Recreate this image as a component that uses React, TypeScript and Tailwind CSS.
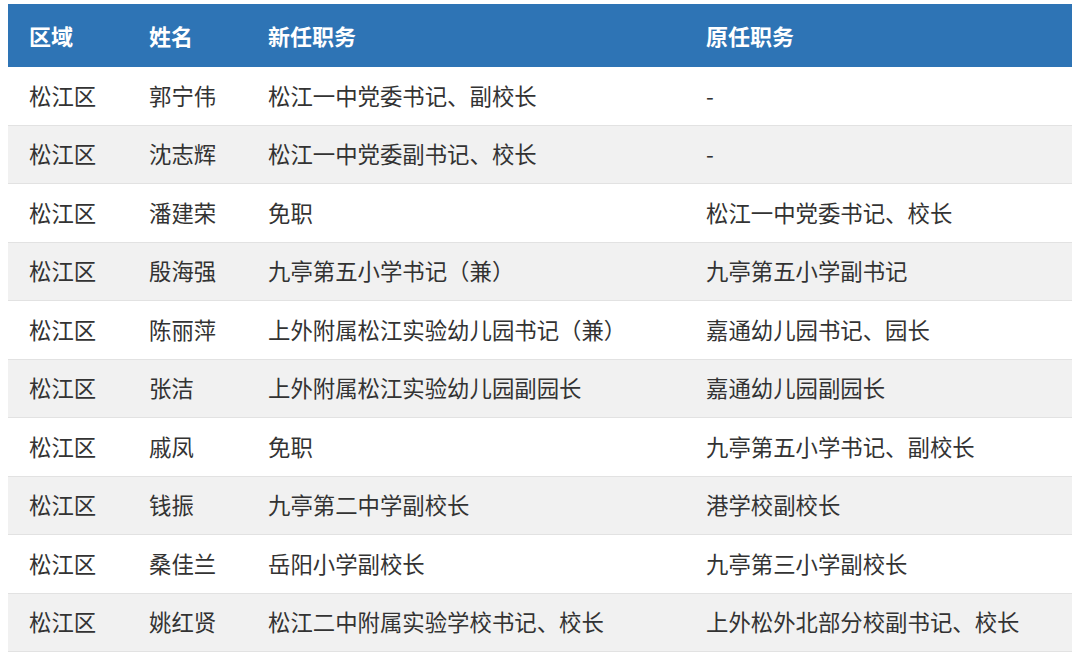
const rows = [
  ["松江区", "郭宁伟", "松江一中党委书记、副校长", "-"],
  ["松江区", "沈志辉", "松江一中党委副书记、校长", "-"],
  ["松江区", "潘建荣", "免职", "松江一中党委书记、校长"],
  ["松江区", "殷海强", "九亭第五小学书记（兼）", "九亭第五小学副书记"],
  ["松江区", "陈丽萍", "上外附属松江实验幼儿园书记（兼）", "嘉通幼儿园书记、园长"],
  ["松江区", "张洁", "上外附属松江实验幼儿园副园长", "嘉通幼儿园副园长"],
  ["松江区", "戚凤", "免职", "九亭第五小学书记、副校长"],
  ["松江区", "钱振", "九亭第二中学副校长", "港学校副校长"],
  ["松江区", "桑佳兰", "岳阳小学副校长", "九亭第三小学副校长"],
  ["松江区", "姚红贤", "松江二中附属实验学校书记、校长", "上外松外北部分校副书记、校长"],
]

const cols = ["w-[120px]", "w-[119px]", "w-[438px]", "flex-1"]

export default function App() {
  return (
    <div className="w-[1080px] h-[658px] bg-white pt-[4px] pl-[8px] font-['Noto_Sans_CJK_SC',sans-serif]">
      <div className="w-[1064px]">
        {/* Header */}
        <div className="flex h-[63px] items-center bg-[#2e74b5] text-[22px] font-bold text-white">
          {["区域", "姓名", "新任职务", "原任职务"].map((h, i) => (
            <div key={h} className={`${cols[i]} pl-[21px]`}>
              {h}
            </div>
          ))}
        </div>
        {/* Rows */}
        {rows.map((r, idx) => (
          <div
            key={idx}
            className={`flex h-[58.5px] items-center border-b border-[#e2e2e2] text-[22.4px] text-[#333333] ${
              idx % 2 === 1 ? "bg-[#f1f1f1]" : "bg-white"
            }`}
          >
            {r.map((c, i) => (
              <div key={i} className={`${cols[i]} pl-[21px] whitespace-nowrap`}>
                {c}
              </div>
            ))}
          </div>
        ))}
      </div>
    </div>
  )
}
